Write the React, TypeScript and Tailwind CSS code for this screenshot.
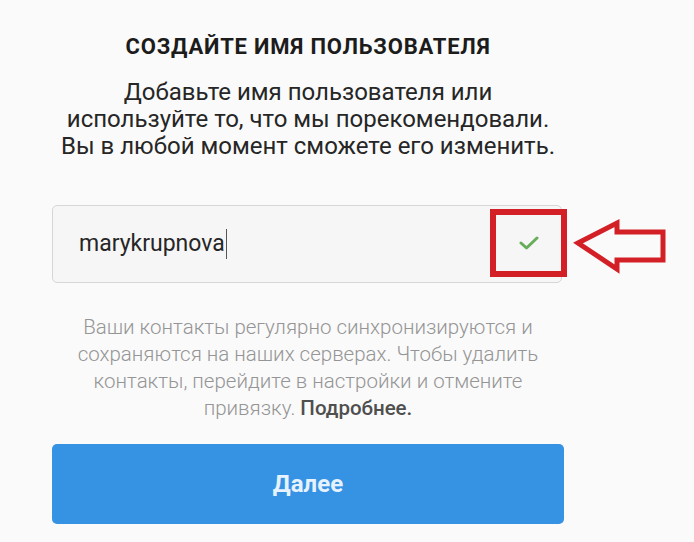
import React from "react";

export default function App() {
  return (
    <div
      className="w-[694px] h-[542px] bg-[#fafafa] overflow-hidden relative"
      style={{ fontFamily: "Roboto, 'Noto Sans', sans-serif" }}
    >
      <div className="ml-[52px] w-[512px] flex flex-col items-center pt-[34px]">
        <h1 className="text-[22px] leading-[25px] font-bold text-[#1c1c1c] text-center tracking-[0.8px]">
          СОЗДАЙТЕ ИМЯ ПОЛЬЗОВАТЕЛЯ
        </h1>
        <p className="mt-[20px] text-[24px] leading-[27px] text-[#262626] text-center w-[600px]">
          Добавьте имя пользователя или
          <br />
          используйте то, что мы порекомендовали.
          <br />
          Вы в любой момент сможете его изменить.
        </p>

        <div className="relative mt-[45px] w-full">
          <div className="h-[78px] w-[510px] rounded-[5px] border border-[#d6d6d6] bg-[#f6f6f6] flex items-center pl-[26px]">
            <span className="text-[23px] text-[#262626]">marykrupnova</span>
            <span className="ml-[1px] w-[1px] h-[30px] bg-[#555]" />
          </div>
          <div className="absolute left-[438px] top-[4px] w-[77px] h-[68px] border-[6px] border-[#d32027] flex items-center justify-center">
            <svg width="20" height="14" viewBox="0 0 20 14">
              <path
                d="M2 7 L7.5 12 L18 2"
                fill="none"
                stroke="#68ad5a"
                strokeWidth="3"
                strokeLinecap="round"
                strokeLinejoin="round"
              />
            </svg>
          </div>
        </div>

        <p className="mt-[31px] text-[20.5px] leading-[27px] text-[#959595] text-center w-[560px] font-light">
          Ваши контакты регулярно синхронизируются и
          <br />
          сохраняются на наших серверах. Чтобы удалить
          <br />
          контакты, перейдите в настройки и отмените
          <br />
          привязку. <span className="text-[#4f4f4f] font-medium">Подробнее.</span>
        </p>

        <button className="mt-[22px] h-[80px] w-[512px] rounded-[5px] bg-[#3692e3] text-[24px] font-bold text-[#e6f3ff]">
          Далее
        </button>
      </div>

      <svg
        className="absolute left-[572px] top-[217px]"
        width="98"
        height="60"
        viewBox="0 0 98 60"
      >
        <path
          d="M6 26 L45 6 L45 15 L91 15 L91 43 L45 43 L45 52 Z"
          fill="none"
          stroke="#d32027"
          strokeWidth="5"
          strokeLinejoin="miter"
        />
      </svg>
    </div>
  );
}
